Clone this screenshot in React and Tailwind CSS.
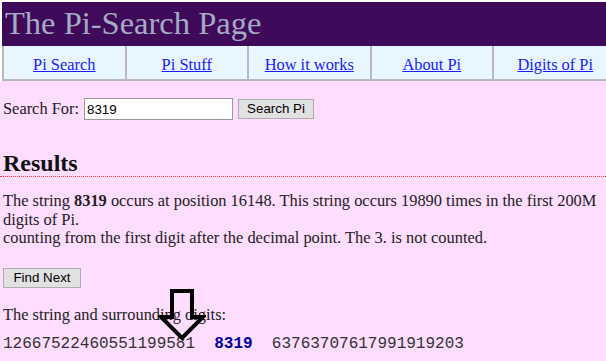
import React from 'react';

const navLinks = ['Pi Search', 'Pi Stuff', 'How it works', 'About Pi', 'Digits of Pi'];

const DownArrow = () => (
  <svg
    className="absolute left-[158px] top-[288px]"
    width="48"
    height="54"
    viewBox="0 0 48 54"
  >
    <polygon
      points="14,3 34,3 34,29 45,29 24,50 3,29 14,29"
      fill="none"
      stroke="#000"
      strokeWidth="4"
      strokeLinejoin="miter"
    />
  </svg>
);

const App = () => {
  return (
    <div className="relative min-h-screen overflow-hidden bg-[#ffddff] text-[#222] font-['Liberation_Serif',serif] text-[16.4px] leading-[18.5px]">
      {/* Header + nav */}
      <div className="bg-white pt-[2px] pl-[2px]">
        <div className="bg-[#400a5a] h-[44px] flex items-center pl-[3px]">
          <h1 className="text-[32.5px] leading-none text-[#a5aac6] pb-[2px]">The Pi-Search Page</h1>
        </div>
        <nav className="grid grid-cols-[repeat(5,122.5px)] w-[614px] bg-[#e8f6ff] border-l-2 border-b-2 border-[#b9b9b9] h-[35px]">
          {navLinks.map((link, i) => (
            <div
              key={link}
              className={`flex items-center justify-center pt-[5px] ${i < 4 ? 'border-r-2 border-[#b9b9b9]' : ''}`}
            >
              <a href="#" className="text-[#1a1aff] underline">{link}</a>
            </div>
          ))}
        </nav>
      </div>

      {/* Search form */}
      <div className="flex items-center px-[3px] mt-[17px] h-[22px]">
        <span className="mr-[5px]">Search For:</span>
        <input
          type="text"
          defaultValue="8319"
          className="w-[149px] h-[22px] bg-white border border-[#999] px-[2px] font-['Liberation_Sans',sans-serif] text-[13.33px] text-black outline-none"
        />
        <button className="ml-[5px] w-[76px] h-[20px] bg-[#e1e1e1] border border-[#adadad] font-['Liberation_Sans',sans-serif] text-[13.33px] text-black">
          Search Pi
        </button>
      </div>

      {/* Results */}
      <h2 className="mt-[30px] px-[3px] text-[24px] leading-[26px] font-bold text-[#111] border-b border-dotted border-[#ff3030]">
        Results
      </h2>

      <p className="px-[3px] pr-[6px] mt-[15px]">
        The string <b>8319</b> occurs at position 16148. This string occurs 19890 times in the first 200M digits of Pi.
        <br />
        counting from the first digit after the decimal point. The 3. is not counted.
      </p>

      <div className="px-[3px] mt-[20px]">
        <button className="w-[78px] h-[20px] bg-[#e1e1e1] border border-[#adadad] font-['Liberation_Sans',sans-serif] text-[13.33px] text-black">
          Find Next
        </button>
      </div>

      <p className="px-[3px] mt-[18px]">The string and surrounding digits:</p>

      <p className="px-[3px] mt-[11px] whitespace-pre font-['Liberation_Mono',monospace] text-[16px] leading-[18px] text-[#333]">
        12667522460551199581  <b className="text-[#0000a0]">8319</b>  63763707617991919203
      </p>

      <DownArrow />
    </div>
  );
};

export default App;
